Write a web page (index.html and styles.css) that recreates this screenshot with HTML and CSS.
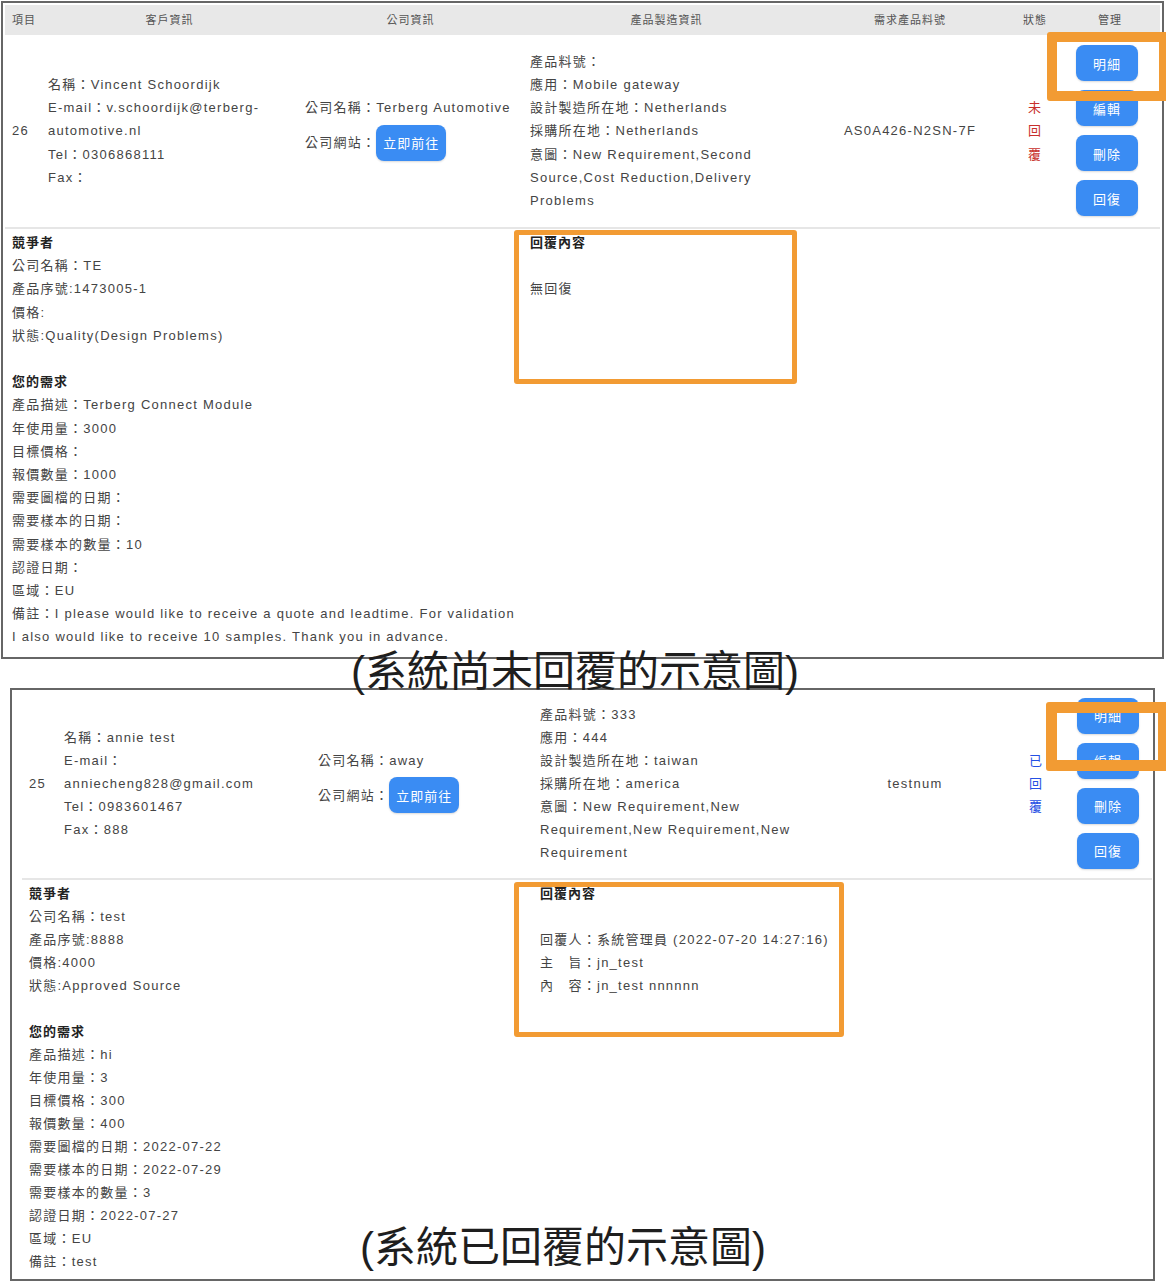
FILE: index.html
```html
<!DOCTYPE html>
<html lang="zh-Hant">

<head>
    <meta charset="UTF-8">
    <meta name="viewport" content="width=device-width, initial-scale=1.0">
    <title>需求單回覆示意圖</title>
    <link rel="stylesheet" href="styles.css">
</head>

<body>
    <div class="page">
        <section class="sheet sheet-a">
            <div class="grid">
                <div class="th th-left">項目</div>
                <div class="th">客戶資訊</div>
                <div class="th">公司資訊</div>
                <div class="th">產品製造資訊</div>
                <div class="th">需求產品料號</div>
                <div class="th">狀態</div>
                <div class="th">管理</div>

                <div class="td">26</div>
                <div class="td col-client">
                    <p>名稱：Vincent Schoordijk</p>
                    <p>E-mail：v.schoordijk@terberg-automotive.nl</p>
                    <p>Tel：0306868111</p>
                    <p>Fax：</p>
                </div>
                <div class="td col-company">
                    <p>公司名稱：Terberg Automotive</p>
                    <p class="site">公司網站：<button class="btn">立即前往</button></p>
                </div>
                <div class="td col-product">
                    <p>產品料號：</p>
                    <p>應用：Mobile gateway</p>
                    <p>設計製造所在地：Netherlands</p>
                    <p>採購所在地：Netherlands</p>
                    <p>意圖：New Requirement,Second Source,Cost Reduction,Delivery Problems</p>
                </div>
                <div class="td center">AS0A426-N2SN-7F</div>
                <div class="td center"><span class="status status-no">未回覆</span></div>
                <div class="td actions">
                    <button class="btn">明細</button>
                    <button class="btn">編輯</button>
                    <button class="btn">刪除</button>
                    <button class="btn">回復</button>
                </div>

                <div class="detail detail-left">
                    <div class="group">
                        <p class="title">競爭者</p>
                        <p>公司名稱：TE</p>
                        <p>產品序號:1473005-1</p>
                        <p>價格:</p>
                        <p>狀態:Quality(Design Problems)</p>
                    </div>
                    <div class="group">
                        <p class="title">您的需求</p>
                        <p>產品描述：Terberg Connect Module</p>
                        <p>年使用量：3000</p>
                        <p>目標價格：</p>
                        <p>報價數量：1000</p>
                        <p>需要圖檔的日期：</p>
                        <p>需要樣本的日期：</p>
                        <p>需要樣本的數量：10</p>
                        <p>認證日期：</p>
                        <p>區域：EU</p>
                        <p>備註：I please would like to receive a quote and leadtime. For validation I also would like to receive 10 samples. Thank you in advance.</p>
                    </div>
                </div>
                <div class="detail detail-right">
                    <p class="title reply-title">回覆內容</p>
                    <p>無回復</p>
                </div>
            </div>
        </section>

        <p class="caption">(系統尚未回覆的示意圖)</p>

        <section class="sheet sheet-b">
            <div class="grid">
                <div class="td">25</div>
                <div class="td col-client">
                    <p>名稱：annie test</p>
                    <p>E-mail：anniecheng828@gmail.com</p>
                    <p>Tel：0983601467</p>
                    <p>Fax：888</p>
                </div>
                <div class="td col-company">
                    <p>公司名稱：away</p>
                    <p class="site">公司網站：<button class="btn">立即前往</button></p>
                </div>
                <div class="td col-product">
                    <p>產品料號：333</p>
                    <p>應用：444</p>
                    <p>設計製造所在地：taiwan</p>
                    <p>採購所在地：america</p>
                    <p>意圖：New Requirement,New Requirement,New Requirement,New Requirement</p>
                </div>
                <div class="td center">testnum</div>
                <div class="td center"><span class="status status-yes">已回覆</span></div>
                <div class="td actions">
                    <button class="btn">明細</button>
                    <button class="btn">編輯</button>
                    <button class="btn">刪除</button>
                    <button class="btn">回復</button>
                </div>

                <div class="detail detail-left">
                    <div class="group">
                        <p class="title">競爭者</p>
                        <p>公司名稱：test</p>
                        <p>產品序號:8888</p>
                        <p>價格:4000</p>
                        <p>狀態:Approved Source</p>
                    </div>
                    <div class="group">
                        <p class="title">您的需求</p>
                        <p>產品描述：hi</p>
                        <p>年使用量：3</p>
                        <p>目標價格：300</p>
                        <p>報價數量：400</p>
                        <p>需要圖檔的日期：2022-07-22</p>
                        <p>需要樣本的日期：2022-07-29</p>
                        <p>需要樣本的數量：3</p>
                        <p>認證日期：2022-07-27</p>
                        <p>區域：EU</p>
                        <p>備註：test</p>
                    </div>
                </div>
                <div class="detail detail-right">
                    <p class="title reply-title">回覆內容</p>
                    <p>回覆人：系統管理員 (2022-07-20 14:27:16)</p>
                    <p>主　旨：jn_test</p>
                    <p>內　容：jn_test nnnnnn</p>
                </div>
            </div>
        </section>

        <!-- 標註框與說明文字 -->
        <span class="mark mark-a1"></span>
        <span class="mark mark-a2"></span>
        <span class="mark mark-b1"></span>
        <span class="mark mark-b2"></span>
        <p class="caption caption-b">(系統已回覆的示意圖)</p>
    </div>
</body>

</html>
```

FILE: styles.css
```css
:root {
    --text: #444;
    --title: #222;
    --line: #e6e6e6;
    --frame: #666;
    --blue: #3a8cf3;
    --mark: #f29b33;
}

* {
    margin: 0;
    padding: 0;
    box-sizing: border-box;
}

body {
    background: #fff;
    color: var(--text);
    font-family: "Liberation Sans", "Noto Sans CJK TC", sans-serif;
    font-size: 13px;
    letter-spacing: 1.25px;
    line-height: 23.2px;
    overflow: hidden;
}

.page {
    position: relative;
    width: 1166px;
    height: 1282px;
    padding-top: 1px;
}

.sheet {
    border: 2px solid var(--frame);
    background: #fff;
}

.sheet-a {
    width: 1163px;
    margin-left: 1px;
    padding: 2px 2px 8px 2px;
}

.sheet-b {
    width: 1145px;
    margin-left: 10px;
    padding: 0 2px 6px 10px;
    line-height: 23px;
}

.grid {
    display: grid;
    align-items: center;
}

.sheet-a .grid {
    grid-template-columns: 36px 257px 225px 287px 200px 50px 100px;
}

.sheet-b .grid {
    grid-template-columns: 35px 254px 222px 285px 194px 48px 92px;
}

/* 表頭 */
.th {
    background: #e8e8e8;
    height: 30px;
    line-height: 30px;
    font-size: 11px;
    letter-spacing: 1px;
    color: #555;
    text-align: center;
}

.th-left {
    text-align: left;
    padding-left: 7px;
}

/* 資料列 */
.td {
    align-self: stretch;
    display: flex;
    flex-direction: column;
    justify-content: center;
    padding: 0 7px;
    border-bottom: 2px solid var(--line);
}

.col-client {
    padding-right: 20px;
}

.col-company {
    padding-bottom: 5px;
}

.col-product {
    padding-right: 20px;
}

.center {
    align-items: center;
    text-align: center;
}

.site {
    display: flex;
    align-items: center;
    margin-top: 5px;
}

.btn {
    border: none;
    background: var(--blue);
    color: #fff;
    font-family: inherit;
    font-size: 13px;
    letter-spacing: 1px;
    height: 36px;
    padding: 0 7px;
    border-radius: 8px;
    box-shadow: 0 1px 2px rgba(0, 0, 0, 0.15);
    cursor: pointer;
}

.actions {
    align-items: flex-start;
    gap: 9px;
    padding: 10px 0 11px 16px;
}

.sheet-b .actions {
    padding: 8px 0 9px 17px;
}

.actions .btn {
    width: 62px;
}

.status {
    display: block;
    width: 14px;
    word-break: break-all;
}

.status-no {
    color: #c8302c;
}

.status-yes {
    color: #2550e4;
}

/* 詳細內容 */
.detail {
    align-self: start;
    padding: 2px 7px 0;
}

.sheet-b .detail {
    padding-top: 2px;
}

.detail-left {
    grid-column: 1 / 4;
    padding-right: 4px;
}

.detail-right {
    grid-column: 4 / 8;
}

.group + .group {
    margin-top: 23.2px;
}

.sheet-b .group + .group {
    margin-top: 23px;
}

.title {
    font-weight: bold;
    letter-spacing: 1px;
    color: var(--title);
}

.reply-title {
    margin-bottom: 23px;
}

/* 說明文字 */
.caption {
    position: relative;
    z-index: 2;
    margin: -7px 0 -4px;
    padding-right: 16px;
    height: 40px;
    line-height: 40px;
    font-size: 42px;
    letter-spacing: 0;
    color: #1e1e1e;
    text-align: center;
}

.caption-b {
    position: absolute;
    left: 360px;
    top: 1225px;
    margin: 0;
    padding: 0;
    height: 46px;
    line-height: 46px;
}

/* 橘色標註框 */
.mark {
    position: absolute;
    border: 5px solid var(--mark);
    border-radius: 3px;
    z-index: 3;
}

.mark-a1 {
    left: 1047px;
    top: 32px;
    width: 122px;
    height: 69px;
    border-width: 10px;
}

.mark-a2 {
    left: 514px;
    top: 230px;
    width: 283px;
    height: 154px;
}

.mark-b1 {
    left: 1046px;
    top: 702px;
    width: 123px;
    height: 69px;
    border-width: 11px;
}

.mark-b2 {
    left: 514px;
    top: 882px;
    width: 330px;
    height: 155px;
}
```
